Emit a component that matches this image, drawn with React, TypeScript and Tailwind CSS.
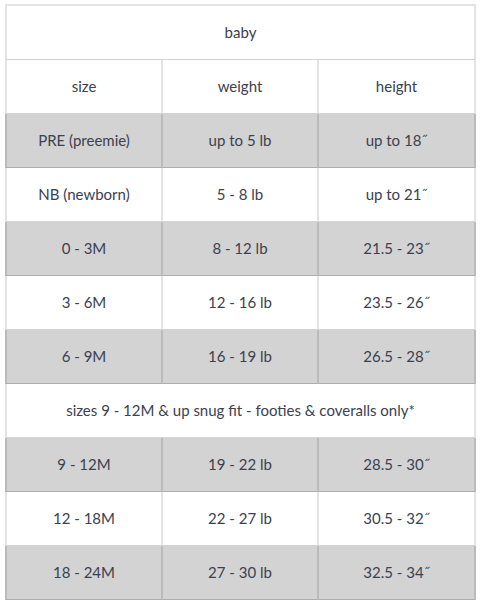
const rows: { cells: string[]; shade: boolean }[] = [
  { cells: ["PRE (preemie)", "up to 5 lb", "up to 18\u02DD"], shade: true },
  { cells: ["NB (newborn)", "5 - 8 lb", "up to 21\u02DD"], shade: false },
  { cells: ["0 - 3M", "8 - 12 lb", "21.5 - 23\u02DD"], shade: true },
  { cells: ["3 - 6M", "12 - 16 lb", "23.5 - 26\u02DD"], shade: false },
  { cells: ["6 - 9M", "16 - 19 lb", "26.5 - 28\u02DD"], shade: true },
];

const rows2: { cells: string[]; shade: boolean }[] = [
  { cells: ["9 - 12M", "19 - 22 lb", "28.5 - 30\u02DD"], shade: true },
  { cells: ["12 - 18M", "22 - 27 lb", "30.5 - 32\u02DD"], shade: false },
  { cells: ["18 - 24M", "27 - 30 lb", "32.5 - 34\u02DD"], shade: true },
];

// borders are translucent so they read darker on the grey rows
const cell =
  "h-[54px] p-0 text-center align-middle border-r-2 border-b border-r-[rgba(0,0,0,0.11)] border-b-[rgba(0,0,0,0.17)]";
const first = "border-l-2 border-l-[rgba(0,0,0,0.11)]";

function SizeRow({ cells, shade }: { cells: string[]; shade: boolean }) {
  return (
    <tr className={shade ? "bg-[#d3d3d3]" : "bg-white"}>
      {cells.map((c, i) => (
        <td key={i} className={i === 0 ? `${cell} ${first}` : cell}>
          {c}
        </td>
      ))}
    </tr>
  );
}

export default function App() {
  return (
    <div className="w-[480px] h-[606px] bg-white pt-[4px] pl-[5px]">
      <table className="w-[471px] table-fixed border-separate border-spacing-0 text-[15px] text-[#3b4150] font-['Lato','Open_Sans',sans-serif]">
        <colgroup>
          <col className="w-[158px]" />
          <col className="w-[156px]" />
          <col className="w-[157px]" />
        </colgroup>
        <tbody>
          <tr>
            <td
              colSpan={3}
              className={`${cell} ${first} h-[56px] border-t-2 border-t-[rgba(0,0,0,0.11)]`}
            >
              baby
            </td>
          </tr>
          <tr>
            <td className={`${cell} ${first}`}>size</td>
            <td className={cell}>weight</td>
            <td className={cell}>height</td>
          </tr>
          {rows.map((r, i) => (
            <SizeRow key={i} {...r} />
          ))}
          <tr>
            <td colSpan={3} className={`${cell} ${first}`}>
              sizes 9 - 12M &amp; up snug fit - footies &amp; coveralls only*
            </td>
          </tr>
          {rows2.map((r, i) => (
            <SizeRow key={i} {...r} />
          ))}
        </tbody>
      </table>
    </div>
  );
}
